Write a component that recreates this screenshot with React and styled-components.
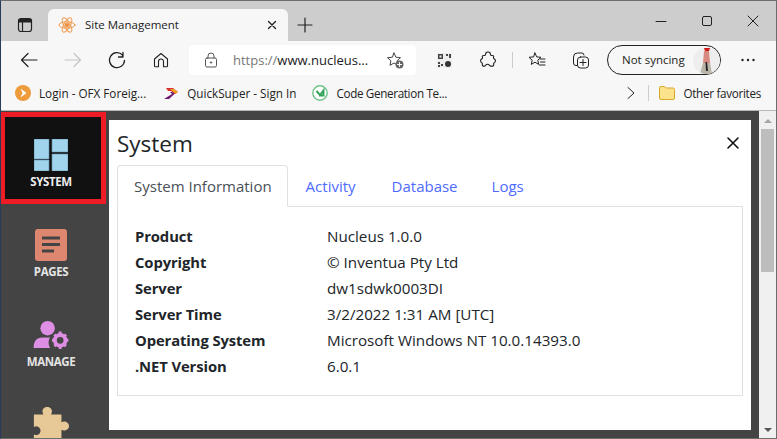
import React from "react";
import styled, { createGlobalStyle } from "styled-components";

const Global = createGlobalStyle`
  html, body { margin: 0; padding: 0; width: 777px; height: 439px; overflow: hidden; background: #444; }
  * { box-sizing: border-box; }
`;
const UI = `"Open Sans", "Noto Sans", sans-serif`;
const Win = styled.div`
  width: 777px; height: 439px; display: flex; flex-direction: column; overflow: hidden;
  border: 1px solid #6e6e6e; border-left-color: #2a3a5c;
  font-family: ${UI};
`;
const TabBar = styled.div`
  height: 40px; flex: none; background: #cdcdcd; display: flex; align-items: flex-end; padding-left: 47px; position: relative;
`;
const IconBtn = styled.div`
  flex: none; display: flex; align-items: center; justify-content: center;
  width: ${p => p.$w || 30}px; height: ${p => p.$h || 30}px; margin-left: ${p => p.$ml || 0}px;
`;
const SideBtn = styled(IconBtn)`
  position: absolute; left: 9px; top: 9px;
`;
const Tab = styled.div`
  width: 240px; height: 32px; background: #f7f7f7; border-radius: 6px 6px 0 0; display: flex; align-items: center; padding: 0 11px 0 10px; gap: 9px;
  font-size: 11.5px; color: #222;
`;
const TabTitle = styled.span` flex: 1; margin-top: -2px; `;
const Spacer = styled.div` flex: 1; `;
const WinCtl = styled.div`
  display: flex; align-self: flex-start; padding-top: 5px;
`;
const Toolbar = styled.div`
  height: 38px; flex: none; background: #f7f7f7; display: flex; align-items: center; padding-left: 19px;
`;
const Omni = styled.div`
  width: 227px; height: 30px; margin-left: 19px; background: #fff; border-radius: 4px; display: flex; align-items: center; padding: 0 11px 0 15px;
  font-size: 13px; color: #777; white-space: nowrap;
`;
const UrlGap = styled.span` width: 15px; flex: none; `;
const UrlHost = styled.span` color: #222; `;
const Sep = styled.div`
  width: 1px; height: 16px; background: #ccc; flex: none;
  margin-left: ${p => p.$ml || 0}px;
`;
const Sync = styled.div`
  width: 114px; height: 30px; border: 1px solid #222; border-radius: 15px; display: flex; align-items: center; justify-content: space-between; padding: 0 0 2px 14px;
  font-size: 11.5px; color: #222; margin-left: 17px; flex: none;
`;
const Avatar = styled.div`
  width: 27px; height: 27px; border-radius: 50%; background: #eee; overflow: hidden; display: flex; margin-bottom: -2px;
`;
const Bookmarks = styled.div`
  height: 32px; flex: none; background: #f7f7f7; border-bottom: 1px solid #b8b8b8; display: flex; align-items: center; padding: 0 0 3px 14px;
  font-size: 11.7px; color: #222;
`;
const Mark = styled.div`
  display: flex; align-items: center; gap: 8px; white-space: nowrap;
  margin-right: ${p => p.$mr || 0}px; margin-left: ${p => p.$ml || 0}px;
  letter-spacing: ${p => p.$ls || 0}px;
`;
const Page = styled.div`
  flex: 1; min-height: 0; display: flex; background: #444;
`;
const Rail = styled.nav`
  width: 108px; flex: none; display: flex; flex-direction: column; overflow: hidden;
`;
const RailItem = styled.div`
  flex: none; width: 100px; height: ${p => p.$h}px; padding-top: ${p => p.$pt}px; display: flex; flex-direction: column; align-items: center; gap: ${p => p.$gap}px;
  font-weight: 700; font-size: 11.5px; line-height: 14px; color: #e4e4e4;
  letter-spacing: -0.4px;
  ${p => p.$active && `background: #111; border: 5px solid #ee1c25; color: #eee; width: 106px; margin: 1px 0 0 -1px; padding-right: 4px;`}
`;
const Main = styled.main`
  flex: 1; min-width: 0; background: #fff; margin: 9px 8px 8px 0; padding: 9px 8px 0; position: relative; display: flex; flex-direction: column;
`;
const Title = styled.h1`
  margin: 0; font: 500 22.5px/30px ${UI}; color: #212529;
`;
const CloseX = styled.div`
  position: absolute; right: 10px; top: 15px; width: 16px; height: 16px; display: flex;
`;
const Tabs = styled.div`
  display: flex; margin-top: 6px; height: 42px; position: relative; z-index: 1;
`;
const TabItem = styled.div`
  height: 42px; padding: 0 ${p => p.$pr || 16}px 0 ${p => p.$pl || 16}px; display: flex; align-items: center; font-size: 15px; color: #4f6bff;
  ${p => p.$active && `color: #495057; background: #fff; border: 1px solid #dee2e6; border-bottom-color: #fff; border-radius: 4px 4px 0 0;`}
`;
const Panel = styled.div`
  border: 1px solid #dee2e6; margin-top: -1px; height: 190px; padding: 16px 17px 0;
`;
const InfoRow = styled.div`
  display: grid; grid-template-columns: 192px 1fr; height: 26px; align-items: center; font-size: 15.2px; color: #212529;
`;
const Key = styled.div` font-weight: 700; font-size: 14.8px; letter-spacing: -0.1px; `;
const Scroll = styled.div`
  width: 17px; flex: none; background: #f0f0f0; display: flex; flex-direction: column; align-items: center; justify-content: space-between; position: relative;
`;
const Thumb = styled.div`
  position: absolute; left: 2px; top: 18px; width: 13px; height: 143px; background: #bdbdbd;
`;
const Arrow = styled.div`
  width: 0; height: 0; border-left: 4px solid transparent; border-right: 4px solid transparent; margin: 8px 0 6px;
  ${p => p.$up ? `border-bottom: 4px solid #a6a6a6;` : `border-top: 4px solid #555;`}
`;

const S = ({ w = 20, h = 20, vb = "0 0 20 20", sw = 1.2, c = "#222", children }) => (
  <svg width={w} height={h} viewBox={vb} fill="none" stroke={c} strokeWidth={sw} strokeLinecap="round" strokeLinejoin="round">{children}</svg>
);

const info = [
  ["Product", "Nucleus 1.0.0"],
  ["Copyright", "© Inventua Pty Ltd"],
  ["Server", "dw1sdwk0003DI"],
  ["Server Time", "3/2/2022 1:31 AM [UTC]"],
  ["Operating System", "Microsoft Windows NT 10.0.14393.0"],
  [".NET Version", "6.0.1"],
];

export default function App() {
  return (
    <Win>
      <Global />
      <TabBar>
        <SideBtn>
          <S w={16} h={16} vb="0 0 16 16"><rect x="1.5" y="1.5" width="13" height="13" rx="2.5" /><path d="M5.5 5v9.5" /><path d="M2 2.500h12V5H2z" fill="#222" /></S>
        </SideBtn>
        <Tab>
          <S w={18} h={18} vb="0 0 18 18" c="#ee9a4d" sw={1}>
            <ellipse cx="9" cy="9" rx="8" ry="3.2" /><ellipse cx="9" cy="9" rx="8" ry="3.2" transform="rotate(60 9 9)" /><ellipse cx="9" cy="9" rx="8" ry="3.2" transform="rotate(120 9 9)" /><circle cx="9" cy="9" r="2" fill="#ee8a3d" />
          </S>
          <TabTitle>Site Management</TabTitle>
          <S w={10} h={10} vb="0 0 10 10" sw={1.4}><path d="M1.500 1.500l7 7M8.500 1.500l-7 7" /></S>
        </Tab>
        <IconBtn $w={34} $h={32}>
          <S w={16} h={16} vb="0 0 16 16" sw={1.2}><path d="M8 1v14M1 8h14" /></S>
        </IconBtn>
        <Spacer />
        <WinCtl>
          <IconBtn $w={46}><S w={12} h={12} vb="0 0 12 12" sw={1}><path d="M1 6.500h10" /></S></IconBtn>
          <IconBtn $w={46}><S w={12} h={12} vb="0 0 12 12" sw={1}><rect x="1.500" y="1.500" width="9" height="9" rx="1.500" /></S></IconBtn>
          <IconBtn $w={46}><S w={12} h={12} vb="0 0 12 12" sw={1}><path d="M1 1l10 10M11 1L1 11" /></S></IconBtn>
        </WinCtl>
      </TabBar>
      <Toolbar>
        <S w={18} h={18} vb="0 0 18 18" sw={1.2}><path d="M17 9H1.500M8 2.500L1.500 9 8 15.500" /></S>
        <IconBtn $w={18} $ml={26}><S w={18} h={18} vb="0 0 18 18" sw={1.2} c="#c6c6c6"><path d="M1 9h15.500M10 2.500L16.500 9 10 15.500" /></S></IconBtn>
        <IconBtn $w={18} $ml={26}><S w={18} h={18} vb="0 0 18 18" sw={1.3}><path d="M15 1.500V6h-4.500M16.500 9.500a7.500 7.500 0 1 1-2-5.500L15 6" /></S></IconBtn>
        <IconBtn $w={18} $ml={26}><S w={16} h={16} vb="0 0 16 16" sw={1.1}><path d="M1.500 7L8 1.500 14.500 7v7a.8.8 0 0 1-.8.800H10.500V9.500a2.500 2.500 0 0 0-5 0v5.300H2.300a.8.8 0 0 1-.8-.8z" /></S></IconBtn>
        <Omni>
          <IconBtn $w={14} $h={18}><S w={14} h={16} vb="0 0 14 16" sw={1} c="#555"><rect x="1.500" y="6" width="11" height="9" rx="1.500" /><path d="M4 6V4a3 3 0 0 1 6 0v2" /><circle cx="7" cy="10.500" r=".7" fill="#555" /></S></IconBtn>
          <UrlGap />
          <span>https://<UrlHost>www.nucleus...</UrlHost></span>
          <Spacer />
          <IconBtn $w={20}><S w={18} h={18} vb="0 0 18 18" sw={1} c="#444"><path d="M8 2l1.900 4.200 4.600.5-3.400 3.100.9 4.500L8 12l-4 2.300.9-4.500L1.500 6.700l4.600-.5z" /><circle cx="13.500" cy="13.500" r="4" fill="#666" stroke="none" /><path d="M13.500 11.500v4M11.500 13.500h4" stroke="#fff" /></S></IconBtn>
        </Omni>
        <IconBtn $w={16} $ml={20}>
          <svg width="15" height="15" viewBox="0 0 15 15"><rect width="15" height="15" fill="#eee" /><path d="M1 1h5v5H1zM2.500 2.500v2h2v-2zM9 1h2v2H9zM12 1h2v4h-2zM1 9h2v2H1zM4 11h2v2H4zM1 12h2v2H1z" fill="#444" fillRule="evenodd" /><circle cx="11" cy="11" r="3" fill="#333" /></svg>
        </IconBtn>
        <IconBtn $w={18} $ml={27}><S w={18} h={18} vb="0 0 18 18" sw={1.1}><path d="M6.500 3.500a2.500 2.500 0 0 1 5 0 1 1 0 0 0 .8.900l1.400.100a1 1 0 0 1 1 1l-.2 1.200a1 1 0 0 0 .6 1 2.300 2.300 0 0 1 0 4.200 1 1 0 0 0-.6 1l.2 1a1 1 0 0 1-1 1.200h-2.300c-.6 0-.8-.4-1-.8a2.200 2.200 0 0 0-3.800 0c-.2.400-.4.800-1 .8H4.300a1 1 0 0 1-1-1.200l.2-1a1 1 0 0 0-.6-1 2.300 2.300 0 0 1 0-4.200 1 1 0 0 0 .6-1l-.2-1.200a1 1 0 0 1 1-1l1.400-.1a1 1 0 0 0 .8-.9z" /></S></IconBtn>
        <Sep $ml={15} />
        <IconBtn $w={18} $ml={15}><S w={18} h={18} vb="0 0 18 18" sw={1}><path d="M7 2l1.700 3.900 4.300.4-3.200 2.900.9 4.200L7 11.200l-3.700 2.200.9-4.200L1 6.300l4.300-.4zM12 8h5M12.500 11H17M11.500 14H17" /></S></IconBtn>
        <IconBtn $w={18} $ml={26}><S w={18} h={18} vb="0 0 18 18" sw={1}><path d="M5 14.500H4a2.500 2.500 0 0 1-2.500-2.500V6a4 4 0 0 1 4-4H10a2 2 0 0 1 2 2" /><rect x="5.500" y="6" width="11" height="11" rx="3" /><path d="M11 8.500v6M8 11.500h6" /></S></IconBtn>
        <Sync>
          <span>Not syncing</span>
          <Avatar>
            <svg width="27" height="27" viewBox="0 0 27 27"><path d="M11 1h6l-1 3h-4z" fill="#d01b1b" /><path d="M11 4h5l1 12h-7z" fill="#d98a80" /><path d="M10 16h7l2 11H7z" fill="#b9b3a8" /><path d="M12.500 15h1.500l1 9h-2z" fill="#222" /></svg>
          </Avatar>
        </Sync>
        <IconBtn $w={16} $ml={19}><S w={16} h={16} vb="0 0 16 16" sw={0} c="#222"><circle cx="2.500" cy="8" r="1.200" fill="#222" /><circle cx="8" cy="8" r="1.200" fill="#222" /><circle cx="13.500" cy="8" r="1.200" fill="#222" /></S></IconBtn>
      </Toolbar>
      <Bookmarks>
        <Mark $mr={17}>
          <svg width="16" height="16" viewBox="0 0 16 16"><circle cx="8" cy="8" r="8" fill="#ee9b3b" /><path d="M5.500 3.500l6 4.500-6 4.500 2-4.500z" fill="#fff" /></svg>
          <span>Login - OFX Foreig...</span>
        </Mark>
        <Mark $mr={16}>
          <svg width="16" height="16" viewBox="0 0 16 16"><path d="M1 14l8-5-2-2h2l3 1.500L6 14z" fill="#6b1c6e" /><path d="M3 3h7l5 4-3 2-4-3H5z" fill="#d8322c" /><path d="M7 4h4l4 3-2.500 1.500z" fill="#f0a320" /></svg>
          <span>QuickSuper - Sign In</span>
        </Mark>
        <Mark $ls={-0.35}>
          <svg width="16" height="16" viewBox="0 0 16 16"><circle cx="8" cy="8" r="7.200" fill="#fff" stroke="#6fc18a" strokeWidth="1.400" /><path d="M4.500 6l3.500 4 3.500-4.500v5H7" fill="none" stroke="#35a35a" strokeWidth="2" /></svg>
          <span>Code Generation Te...</span>
        </Mark>
        <Spacer />
        <S w={10} h={14} vb="0 0 10 14" sw={1}><path d="M2 1.500L8 7l-6 5.500" /></S>
        <Sep $ml={12} />
        <Mark $mr={15} $ml={10} $ls={-0.3}>
          <svg width="16" height="14" viewBox="0 0 16 14"><path d="M.5 2A1.500 1.500 0 0 1 2 .5h3.500L7 2h7a1.500 1.500 0 0 1 1.500 1.500V12a1.500 1.500 0 0 1-1.500 1.500H2A1.500 1.500 0 0 1 .5 12z" fill="#fbe38e" stroke="#d9a72a" /></svg>
          <span>Other favorites</span>
        </Mark>
      </Bookmarks>
      <Page>
        <Rail>
          <RailItem $active $h={92} $pt={22} $gap={4}>
            <svg width="34" height="32" viewBox="0 0 34 32"><path d="M0 0h15v20H0zM18 0h16v13H18zM0 21h15v11H0zM18 15h16v17H18z" fill="#a0d4ec" stroke="#5f8ea8" strokeWidth=".6" /></svg>
            <span>SYSTEM</span>
          </RailItem>
          <RailItem $h={90} $pt={25} $gap={4}>
            <svg width="32" height="32" viewBox="0 0 32 32"><rect width="32" height="32" rx="3" fill="#de8770" /><path d="M7 9h18M7 15.500h18M7 22h12" stroke="#444" strokeWidth="3" /></svg>
            <span>PAGES</span>
          </RailItem>
          <RailItem $h={90} $pt={27} $gap={6}>
            <svg width="36" height="28" viewBox="0 0 36 29"><circle cx="14.500" cy="7.500" r="7.500" fill="#de8fe3" /><path d="M0 28c0-7 3-11 9-11h8c-2 3-2 7 0 11z" fill="#de8fe3" /><circle cx="27.500" cy="20" r="5.500" fill="none" stroke="#de8fe3" strokeWidth="4" /><path d="M27.500 11v3.500M27.500 25.500V29M19 20h3M33 20h3M21.500 14l2 2M31.500 24l2 2M33.500 14l-2 2M23.500 24l-2 2" stroke="#de8fe3" strokeWidth="3" /></svg>
            <span>MANAGE</span>
          </RailItem>
          <RailItem $h={60} $pt={22} $gap={3}>
            <svg width="38" height="40" viewBox="0 0 38 40"><path d="M1 9h10c-2-3-1-8 4-8s6 5 4 8h11v8c3-2 8 0 8 4s-5 6-8 4v13H1v-8c4 2 7-1 7-4s-3-6-7-4z" fill="#e7c998" /></svg>
          </RailItem>
        </Rail>
        <Main>
          <Title>System</Title>
          <CloseX><S w={16} h={16} vb="0 0 16 16" sw={1.6} c="#111"><path d="M3 3l10 10M13 3L3 13" /></S></CloseX>
          <Tabs>
            <TabItem $active $pr={15}>System Information</TabItem>
            <TabItem $pl={18} $pr={18}>Activity</TabItem>
            <TabItem $pl={18} $pr={17}>Database</TabItem>
            <TabItem $pl={17}>Logs</TabItem>
          </Tabs>
          <Panel>
            {info.map(([k, v]) => (
              <InfoRow key={k}><Key>{k}</Key><div>{v}</div></InfoRow>
            ))}
          </Panel>
        </Main>
        <Scroll>
          <Arrow $up />
          <Thumb />
          <Arrow />
        </Scroll>
      </Page>
    </Win>
  );
}
